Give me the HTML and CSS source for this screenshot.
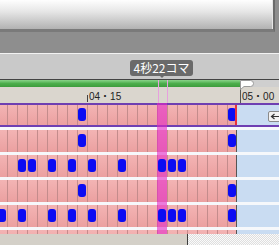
FILE: index.html
```html
<!DOCTYPE html>
<html lang="ja">
<head>
    <meta charset="UTF-8">
    <meta name="viewport" content="width=device-width, initial-scale=1.0">
    <title>Timeline</title>
    <link rel="stylesheet" href="styles.css">
</head>
<body>
    <div class="top">
        <div class="panel"></div>
    </div>

    <div class="header">
        <div class="tip">4秒22コマ</div>
    </div>

    <div class="timebar">
        <div class="progress"><div class="bar"></div></div>
        <div class="ruler">
            <span class="mark mark-a">04・15</span>
            <span class="mark mark-b">05・00</span>
        </div>
        <div class="cursor"></div>
        <svg class="flag" width="16" height="23" viewBox="0 0 16 23">
            <path d="M1.5 9 L1.5 23" stroke="#555" stroke-width="1"/>
            <path d="M1.5 0.5 H11.5 Q14.5 0.5 14.5 3.5 Q14.5 6.5 11.5 6.5 H5 L1.5 9.5 Z" fill="#fff" stroke="#9a9a9a" stroke-width="1"/>
        </svg>
    </div>

    <div class="tracks" id="tracks">
        <div class="playhead"></div>
    </div>

    <div class="footer">
        <div class="status"></div>
        <div class="grip"></div>
    </div>

    <script>
        // key frames per track, index 0 = the half cell on the left edge
        const tracks = [
            [8, 23],
            [8, 23],
            [2, 3, 5, 7, 9, 12, 16, 17, 18],
            [8, 23],
            [0, 2, 5, 7, 9, 12, 16, 17, 18, 23],
            []
        ];

        const list = document.getElementById('tracks');
        const playhead = list.querySelector('.playhead');

        tracks.forEach((keys, i) => {
            const row = document.createElement('div');
            row.className = i === 0 ? 'row sel' : 'row';

            const cells = document.createElement('div');
            cells.className = 'keys';
            for (let c = 0; c < 24; c++) {
                const cell = document.createElement('span');
                cell.className = keys.includes(c) ? 'cell on' : 'cell';
                cells.appendChild(cell);
            }

            const side = document.createElement('div');
            side.className = 'side';
            if (i === 0) {
                side.innerHTML = '<span class="back-btn"><svg width="10" height="7" viewBox="0 0 10 7"><path d="M9 3.5 H2 M4.5 1 L1.5 3.5 L4.5 6" fill="none" stroke="#333" stroke-width="1.2"/></svg></span>';
            }

            row.appendChild(cells);
            row.appendChild(side);
            list.insertBefore(row, playhead);
        });
    </script>
</body>
</html>
```

FILE: styles.css
```css
body {
    margin: 0;
    width: 279px;
    height: 245px;
    overflow: hidden;
    background: #8e8e8e;
    font-family: "Noto Sans CJK JP", sans-serif;
}

.top {
    height: 53px;
}

.panel {
    width: 273px;
    height: 29px;
    background: linear-gradient(#fefefe, #e6e6e6 40%, #b2b2b2);
    border-right: 2px solid #6c6c6c;
    border-bottom: 3px solid #7a7a7a;
    box-shadow: inset -1px 0 #e6e6e6;
}

.header {
    position: relative;
    height: 25px;
    background: #c9c9c9;
    border-top: 1px solid #f2f2f2;
    border-bottom: 1px solid #444;
}

.tip {
    position: absolute;
    left: 130px;
    top: 6px;
    width: 63px;
    height: 16px;
    background: #6a6a6a;
    color: #fff;
    border-radius: 3px;
    font-size: 12px;
    line-height: 16px;
    text-align: center;
}

.tip::after {
    content: "";
    position: absolute;
    left: 30px;
    bottom: -2px;
    border-left: 2px solid transparent;
    border-right: 2px solid transparent;
    border-top: 2px solid #6a6a6a;
}

.timebar {
    position: relative;
}

.progress {
    height: 7px;
    background: #cfcfcf;
}

.bar {
    width: 240px;
    height: 7px;
    background: linear-gradient(#8ad48a, #4cae4c 50%, #3c9c3c);
}

.ruler {
    position: relative;
    height: 16px;
    background: #dad6ce;
}

.mark {
    position: absolute;
    top: 5px;
    font-family: "Liberation Sans", "Noto Sans CJK JP", sans-serif;
    font-size: 10px;
    line-height: 10px;
    color: #222;
}

.mark-a {
    left: 89px;
}

.mark-a::before {
    content: "";
    position: absolute;
    left: -2px;
    top: 3px;
    height: 7px;
    border-left: 1px solid #444;
}

.mark-b {
    left: 242px;
}

.cursor {
    position: absolute;
    left: 158px;
    top: 0;
    width: 8px;
    height: 23px;
    border-left: 1px solid #e7a0de;
    border-right: 1px solid #e7a0de;
}

.flag {
    position: absolute;
    left: 239px;
    top: 0;
}

.tracks {
    position: relative;
    height: 131px;
    overflow: hidden;
    background: #f6f8fb;
}

.row {
    display: flex;
    height: 22px;
    margin-bottom: 3px;
}

.row.sel {
    height: 24px;
    box-sizing: border-box;
    border-top: 2px solid #6e3fb2;
    border-bottom: 2px solid #6e3fb2;
}

.keys {
    flex: none;
    display: flex;
    width: 240px;
    margin-left: -3px;
    overflow: hidden;
    box-sizing: border-box;
    border-right: 1px solid #555;
}

.row.sel .keys {
    border-right: 2px solid #e8303c;
}

.cell {
    position: relative;
    flex: 0 0 10px;
    box-sizing: border-box;
    border-left: 1px solid #c48c8c;
    background: linear-gradient(#f3b4b4, #eba0a0);
}

.cell.on::after {
    content: "";
    position: absolute;
    left: 0;
    top: 50%;
    margin-top: -7px;
    width: 8px;
    height: 13px;
    background: #0c0cf2;
    border-radius: 3px;
    z-index: 2;
}

.side {
    position: relative;
    flex: 1;
    background: #c9dcf2;
}

.back-btn {
    position: absolute;
    left: 31px;
    top: 6px;
    width: 14px;
    height: 11px;
    box-sizing: border-box;
    border: 1px solid #8a8a8a;
    border-radius: 2px;
    background: #f2f2f2;
    display: flex;
    align-items: center;
    justify-content: center;
}

.playhead {
    position: absolute;
    left: 157px;
    top: 0;
    bottom: 0;
    width: 10px;
    background: rgba(228, 40, 200, 0.6);
    z-index: 1;
}

.footer {
    display: flex;
    height: 11px;
}

.status {
    width: 187px;
    background: #d4d0c8;
    border-right: 1px solid #3c3c3c;
}

.grip {
    flex: 1;
    background: repeating-conic-gradient(#dedede 0 25%, #fafafa 0 50%) 0 0 / 2px 2px;
}
```
